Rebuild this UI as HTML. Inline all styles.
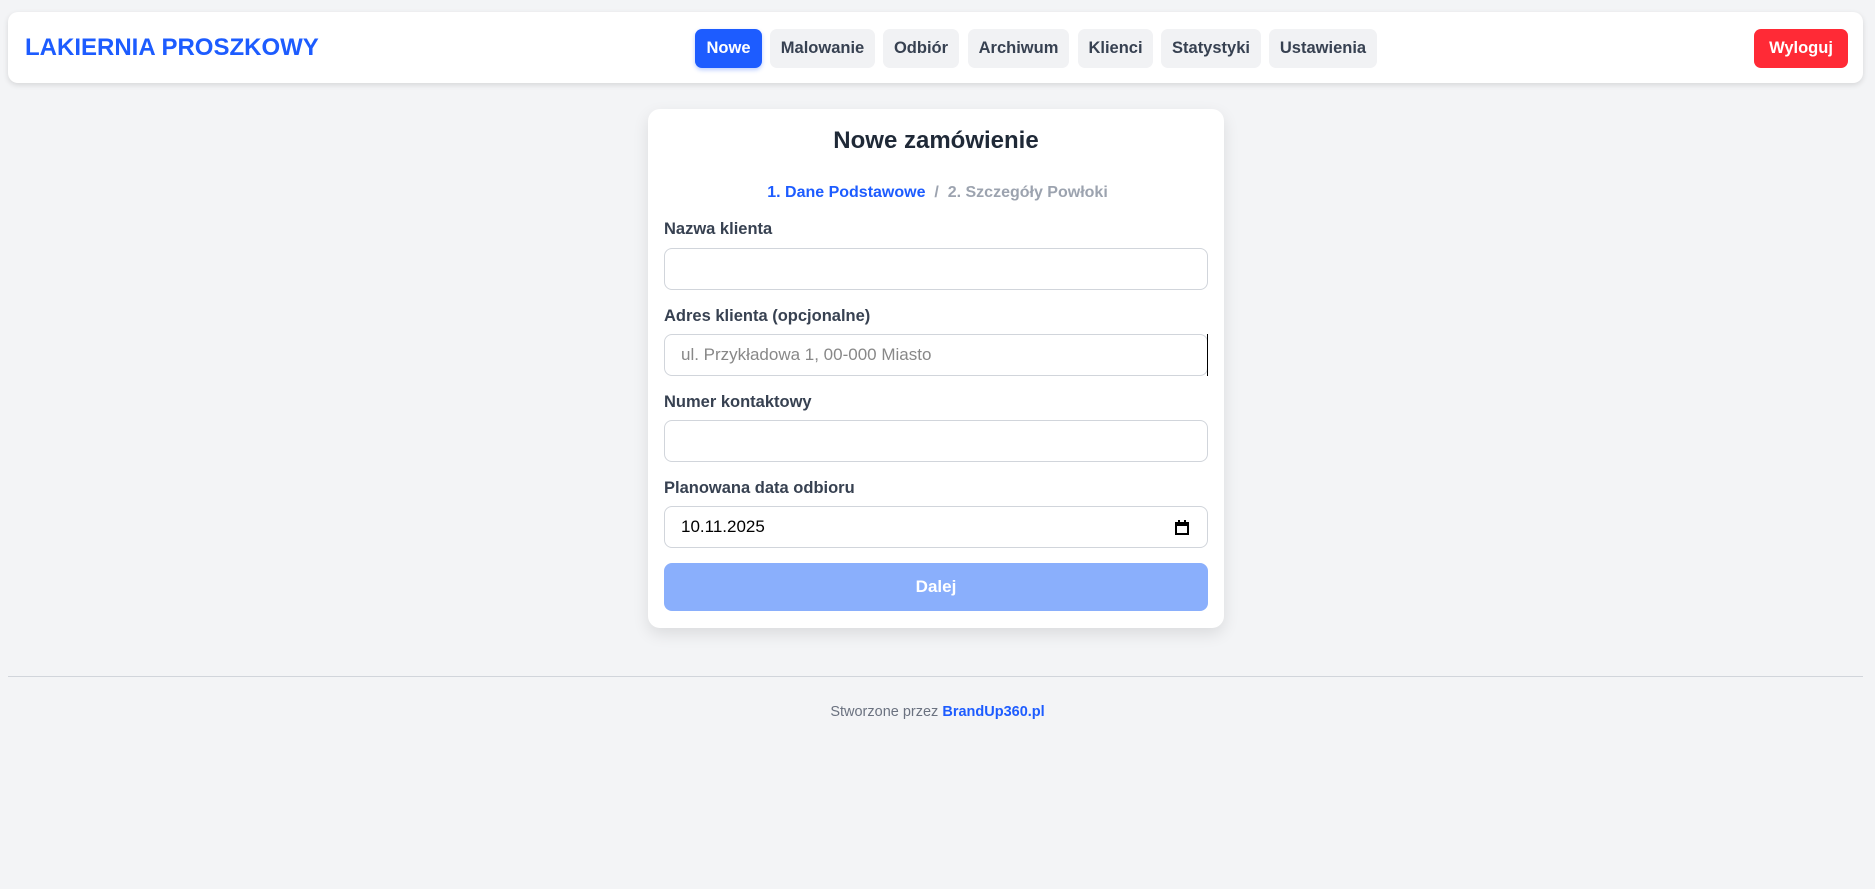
<!DOCTYPE html>
<html><head><meta charset="utf-8"><style>
*{box-sizing:border-box;margin:0;padding:0}
body{width:1875px;height:889px;background:#f3f4f6;font-family:"Liberation Sans",Arial,sans-serif;position:relative;overflow:hidden}
.hdr{position:absolute;left:8px;top:12px;width:1855px;height:71px;background:#fff;border-radius:10px;box-shadow:0 2px 6px rgba(0,0,0,.12)}
.logo{position:absolute;left:17px;top:22px;font-size:24px;font-weight:bold;color:#1d5cff;white-space:nowrap}
.nav{position:absolute;top:29px;height:39px;border-radius:7px;background:#f1f2f4;color:#374151;font-weight:bold;font-size:16.5px;line-height:39px;text-align:center}
.card{position:absolute;left:648px;top:109px;width:576px;height:519px;background:#fff;border-radius:12px;box-shadow:0 6px 16px rgba(0,0,0,.1)}
h1{position:absolute;left:0;width:100%;top:18px;text-align:center;font-size:24px;color:#1f2937}
.steps{position:absolute;left:0;width:100%;text-align:center;font-size:16px;font-weight:bold;color:#9ca3af}
.lbl{position:absolute;left:664px;font-size:16.5px;font-weight:bold;color:#374151}
.inp{position:absolute;left:664px;width:544px;height:42px;border:1px solid #d1d5db;border-radius:8px;background:#fff;font-size:17px;line-height:40px;padding-left:16px}
.btn{position:absolute;left:664px;top:563px;width:544px;height:48px;border-radius:8px;background:#8aaffc;color:#fff;font-weight:bold;font-size:17px;line-height:48px;text-align:center}
.line{position:absolute;left:8px;width:1855px;top:676px;border-top:1px solid #d1d5db}
.foot{position:absolute;left:0;width:100%;top:704px;text-align:center;font-size:14.5px;color:#6b7280}
</style></head><body>
<div class="hdr"><div class="logo">LAKIERNIA PROSZKOWY</div></div>
<div class="nav" style="left:695px;width:67px;background:#1d5cff;color:#fff;box-shadow:0 2px 4px rgba(29,92,255,.3)">Nowe</div>
<div class="nav" style="left:770px;width:105px">Malowanie</div>
<div class="nav" style="left:883px;width:76px">Odbiór</div>
<div class="nav" style="left:968px;width:101px">Archiwum</div>
<div class="nav" style="left:1078px;width:75px">Klienci</div>
<div class="nav" style="left:1161px;width:100px">Statystyki</div>
<div class="nav" style="left:1269px;width:108px">Ustawienia</div>
<div class="nav" style="left:1754px;width:94px;background:#ff2a36;color:#fff">Wyloguj</div>
<div class="card"><h1>Nowe zamówienie</h1></div>
<div class="steps" style="top:184px"><span style="color:#1d5cff">1. Dane Podstawowe</span>&nbsp; / &nbsp;2. Szczegóły Powłoki</div>
<div class="lbl" style="top:220px">Nazwa klienta</div>
<div class="inp" style="top:248px"></div>
<div class="lbl" style="top:307px">Adres klienta (opcjonalne)</div>
<div class="inp" style="top:334px;color:#888">ul. Przykładowa 1, 00-000 Miasto</div>
<div style="position:absolute;left:1207px;top:334px;width:1px;height:42px;background:#000"></div>
<div class="lbl" style="top:393px">Numer kontaktowy</div>
<div class="inp" style="top:420px"></div>
<div class="lbl" style="top:479px">Planowana data odbioru</div>
<div class="inp" style="top:506px;color:#000">10.11.2025
<svg style="position:absolute;right:18px;top:13px" width="14" height="15" viewBox="0 0 14 15"><rect x="1" y="3" width="12" height="11" fill="none" stroke="#000" stroke-width="2"/><rect x="1" y="3" width="12" height="3" fill="#000"/><rect x="3" y="0" width="2" height="3" fill="#000"/><rect x="9" y="0" width="2" height="3" fill="#000"/></svg></div>
<div class="btn">Dalej</div>
<div class="line"></div>
<div class="foot">Stworzone przez <b style="color:#1d5cff">BrandUp360.pl</b></div>
</body></html>
